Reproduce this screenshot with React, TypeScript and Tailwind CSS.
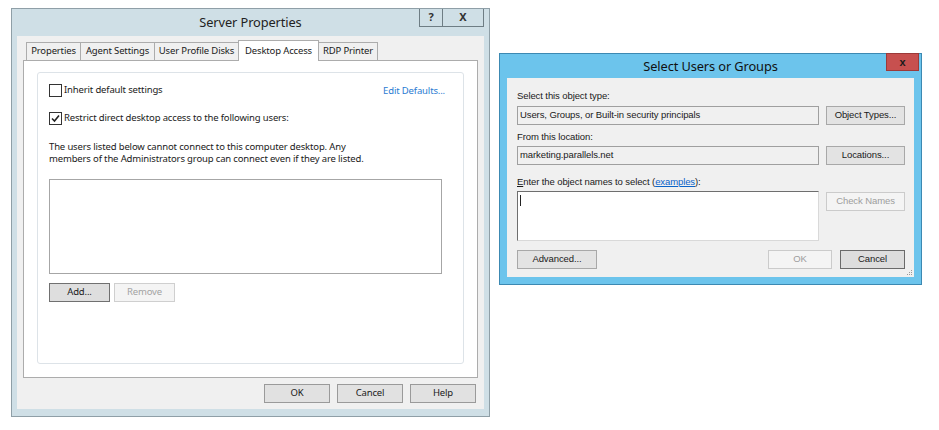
import React from "react";

const L = "font-['Noto_Sans',sans-serif]";
const R = "font-['Liberation_Sans',Arial,sans-serif]";

function Check({ checked }: { checked?: boolean }) {
  return (
    <div className="w-[13px] h-[13px] border border-[#333333] bg-white flex items-center justify-center shrink-0">
      {checked && (
        <svg width="9" height="9" viewBox="0 0 9 9">
          <path d="M1 4.5 L3.5 7 L8 1.5" fill="none" stroke="#222" strokeWidth="1.6" />
        </svg>
      )}
    </div>
  );
}

function LeftWindow() {
  const tabs = [
    { t: "Properties", w: "w-[55px]" },
    { t: "Agent Settings", w: "w-[75px]" },
    { t: "User Profile Disks", w: "w-[85px]" },
    { t: "Desktop Access", w: "w-[81px]", sel: true },
    { t: "RDP Printer", w: "w-[60px]" },
  ];
  return (
    <div className={`w-[479px] h-[409px] border border-[#8f9fa7] bg-[#cfdfe6] flex flex-col ${L}`}>
      <div className="h-[27px] flex items-start shrink-0">
        <div className="w-[70px]" />
        <div className="flex-1 text-center leading-[27px] text-[12.8px] tracking-[-0.1px] text-[#222]">Server Properties</div>
        <div className="flex h-[18px] mr-[5px]">
          <div className="w-[24px] border-x border-b border-[#6e7d84] flex items-center justify-center text-[11px] font-bold text-[#333]">?</div>
          <div className="w-[41px] border-r border-b border-[#6e7d84] flex items-center justify-center text-[11px] font-bold text-[#333]">X</div>
        </div>
      </div>
      <div className="mx-[5px] mb-[7px] flex-1 bg-[#f0f0f0] flex flex-col tracking-[-0.15px]">
        <div className="flex items-end pt-[4px] pl-[9px]">
          {tabs.map((tb) =>
            tb.sel ? (
              <div
                key={tb.t}
                className={`${tb.w} h-[21px] -mb-px -ml-px z-10 bg-white border-x border-t border-[#acacac] flex items-start pt-[3px] justify-center text-[9.5px] text-[#1a1a1a]`}
              >
                {tb.t}
              </div>
            ) : (
              <div
                key={tb.t}
                className={`${tb.w} h-[18px] -ml-px first:ml-0 bg-[#f0f0f0] border-x border-t border-[#acacac] flex items-center justify-center text-[9.5px] text-[#1a1a1a]`}
              >
                {tb.t}
              </div>
            )
          )}
        </div>
        <div className="mx-[6px] h-[318px] border border-[#acacac] bg-white flex flex-col">
          <div className="mt-[11px] mx-[13px] mb-[13px] flex-1 border border-[#dde3e8] rounded-[3px] pl-[11px] pt-[11px] pr-[18px] flex flex-col">
            <div className="flex items-center h-[13px]">
              <Check />
              <span className="ml-[2px] text-[9.5px] text-[#1a1a1a]">Inherit default settings</span>
              <span className="ml-auto mt-[2px] text-[9.5px] text-[#2b7bd2]">Edit Defaults...</span>
            </div>
            <div className="flex items-center h-[13px] mt-[15px]">
              <Check checked />
              <span className="ml-[2px] text-[9.5px] text-[#1a1a1a]">Restrict direct desktop access to the following users:</span>
            </div>
            <div className="mt-[16px] text-[9.5px] leading-[12px] text-[#1a1a1a] w-[330px]">
              The users listed below cannot connect to this computer desktop. Any members of the Administrators group can connect even if they are listed.
            </div>
            <div className="mt-[14px] w-[393px] h-[95px] border border-[#a6a6a6] bg-white" />
            <div className="mt-[9px] flex gap-[4px]">
              <div className="w-[61px] h-[19px] border border-[#707070] bg-[#dedede] flex items-center justify-center text-[9.5px] text-[#1a1a1a]">Add...</div>
              <div className="w-[61px] h-[19px] border border-[#cfcfcf] bg-[#f4f4f4] flex items-center justify-center text-[9.5px] text-[#a3a3a3]">Remove</div>
            </div>
          </div>
        </div>
        <div className="mt-[6px] mr-[8px] flex justify-end gap-[7px]">
          {["OK", "Cancel", "Help"].map((b) => (
            <div key={b} className="w-[66px] h-[19px] border border-[#9a9a9a] bg-[#e1e1e1] flex items-center justify-center text-[9.5px] text-[#1a1a1a]">
              {b}
            </div>
          ))}
        </div>
      </div>
    </div>
  );
}

function Btn({ children, w, disabled, def }: { children: React.ReactNode; w: string; disabled?: boolean; def?: boolean }) {
  const cls = disabled
    ? "border-[#cbcbcb] bg-[#f4f4f4] text-[#9d9d9d]"
    : def
    ? "border-[#6a6a6a] bg-[#dddddd] text-[#1a1a1a]"
    : "border-[#a8a8a8] bg-[#e3e3e3] text-[#1a1a1a]";
  return (
    <div className={`${w} h-[19px] border ${cls} flex items-center justify-center text-[9.5px] shrink-0`}>{children}</div>
  );
}

function RightWindow() {
  return (
    <div className={`w-[423px] h-[232px] border border-[#3c89b2] bg-[#6cc4ec] flex flex-col ${R}`}>
      <div className="h-[24px] flex items-start shrink-0">
        <div className="w-[35px]" />
        <div className={`flex-1 text-center leading-[25px] text-[12.8px] tracking-[-0.1px] text-[#111] ${L}`}>Select Users or Groups</div>
        <div className="w-[33px] h-[18px] mr-[2px] -mt-px bg-[#c7504f] border border-[#9c3a39] flex items-center justify-center text-[11px] font-bold text-[#1a1a1a]">
          x
        </div>
      </div>
      <div className="mx-[7px] mb-[7px] flex-1 bg-[#f0f0f0] flex flex-col pl-[10px] pr-[9px] relative tracking-[-0.1px]">
        <div className="mt-[11px] h-[14px] leading-[14px] text-[9.5px] text-[#1a1a1a]">Select this object type:</div>
        <div className="mt-[3px] flex">
          <div className="w-[302px] h-[19px] border border-[#9f9f9f] bg-[#f0f0f0] pl-[2px] flex items-center text-[9.5px] text-[#1a1a1a]">
            Users, Groups, or Built-in security principals
          </div>
          <div className="ml-[7px]">
            <Btn w="w-[79px]">Object Types...</Btn>
          </div>
        </div>
        <div className="mt-[5px] h-[14px] leading-[14px] text-[9.5px] text-[#1a1a1a]">From this location:</div>
        <div className="mt-[2px] flex">
          <div className="w-[302px] h-[19px] border border-[#9f9f9f] bg-[#f0f0f0] pl-[2px] flex items-center text-[9.5px] text-[#1a1a1a]">
            marketing.parallels.net
          </div>
          <div className="ml-[7px]">
            <Btn w="w-[79px]">Locations...</Btn>
          </div>
        </div>
        <div className="mt-[10px] h-[14px] leading-[14px] text-[9.5px] text-[#1a1a1a]">
          <span className="underline">E</span>nter the object names to select (
          <span className="underline text-[#0b63c8]">examples</span>):
        </div>
        <div className="mt-[2px] flex">
          <div className="w-[302px] h-[50px] border border-[#6e6e6e] border-b-[#d9d9d9] border-r-[#d9d9d9] bg-white pl-[2px] pt-[3px]">
            <div className="w-px h-[11px] bg-[#222]" />
          </div>
          <div className="ml-[7px] mt-[1px]">
            <Btn w="w-[79px]" disabled>
              Check Names
            </Btn>
          </div>
        </div>
        <div className="mt-[9px] flex">
          <Btn w="w-[80px]">Advanced...</Btn>
          <div className="flex-1" />
          <Btn w="w-[64px]" disabled>
            OK
          </Btn>
          <div className="ml-[8px]">
            <Btn w="w-[65px]" def>
              Cancel
            </Btn>
          </div>
        </div>
        <svg className="absolute right-[1px] bottom-[1px]" width="6" height="6" viewBox="0 0 6 6">
          <rect x="4" y="0" width="1" height="1" fill="#9a9a9a" />
          <rect x="2" y="2" width="1" height="1" fill="#9a9a9a" />
          <rect x="4" y="2" width="1" height="1" fill="#9a9a9a" />
          <rect x="0" y="4" width="1" height="1" fill="#9a9a9a" />
          <rect x="2" y="4" width="1" height="1" fill="#9a9a9a" />
          <rect x="4" y="4" width="1" height="1" fill="#9a9a9a" />
        </svg>
      </div>
    </div>
  );
}

export default function App() {
  return (
    <div className="w-[939px] h-[430px] bg-white flex items-start">
      <div className="ml-[11px] mt-[8px]">
        <LeftWindow />
      </div>
      <div className="ml-[9px] mt-[53px]">
        <RightWindow />
      </div>
    </div>
  );
}
